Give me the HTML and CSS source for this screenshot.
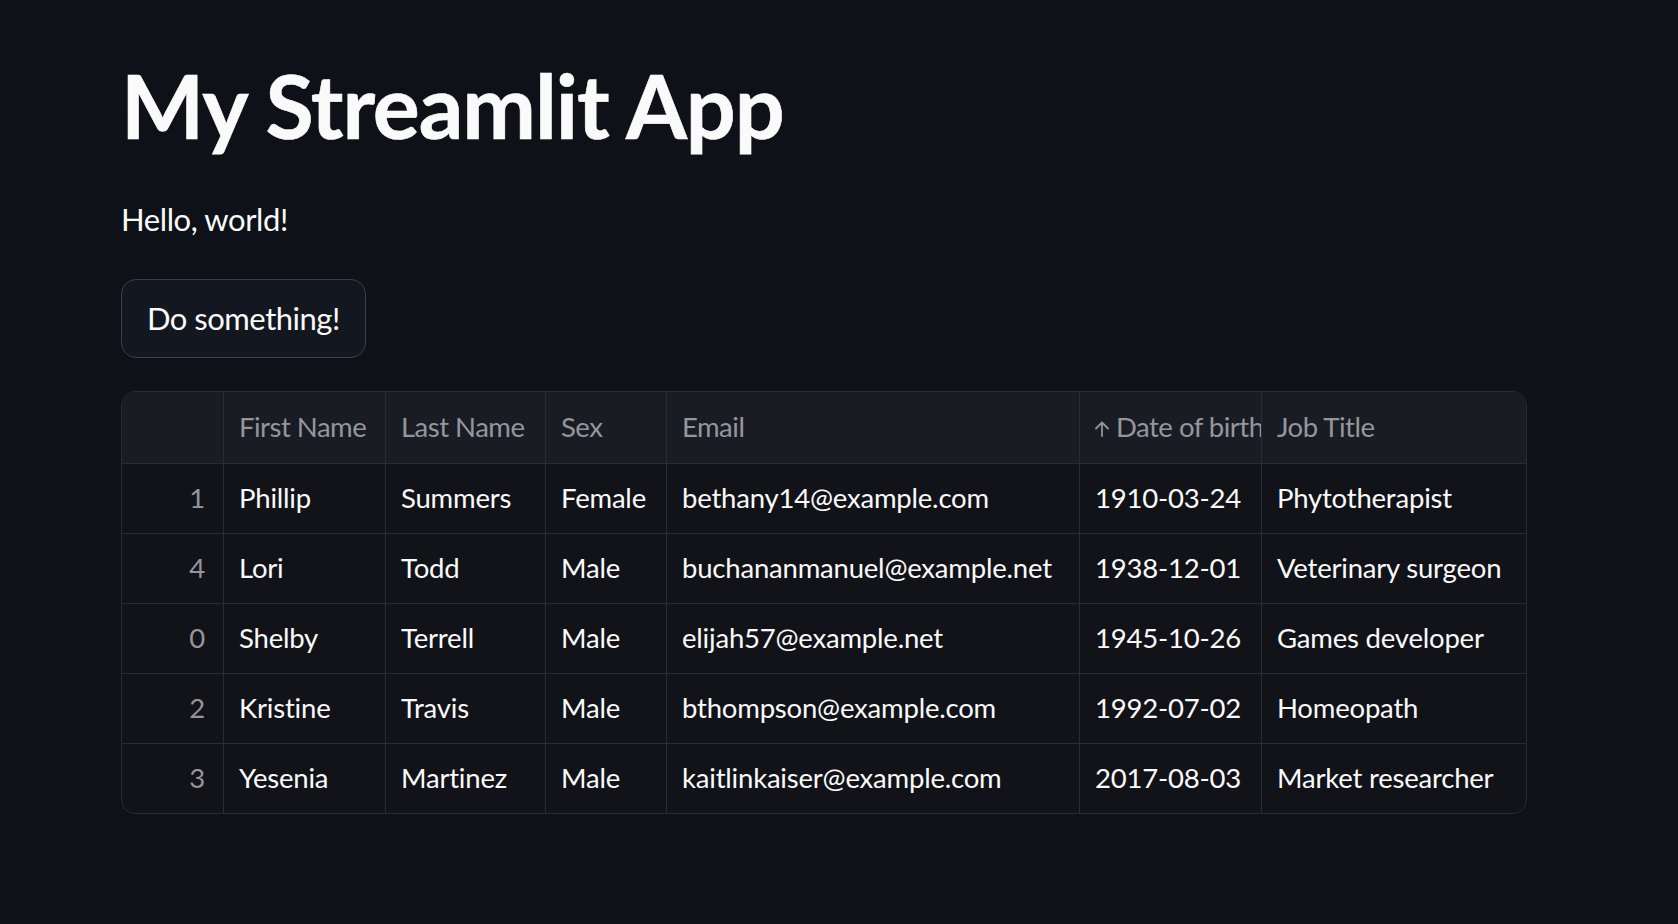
FILE: index.html
```html
<!DOCTYPE html>
<html lang="en">
<head>
<meta charset="utf-8">
<title>My Streamlit App</title>
<link rel="stylesheet" href="styles.css">
</head>
<body>
<main class="app">
  <h1 class="title">My Streamlit App</h1>
  <p class="text">Hello, world!</p>
  <button class="btn" type="button">Do something!</button>
  <div class="grid">
    <div class="row head">
      <div class="cell idx"></div>
      <div class="cell">First Name</div>
      <div class="cell">Last Name</div>
      <div class="cell">Sex</div>
      <div class="cell">Email</div>
      <div class="cell sorted"><svg class="sort" viewBox="0 0 16 17" width="16" height="17" aria-hidden="true"><path d="M8 2.5V16M2 8.5L8 2.5L14 8.5" fill="none" stroke="currentColor" stroke-width="1.8" stroke-linecap="round" stroke-linejoin="round"/></svg><span>Date of birth</span></div>
      <div class="cell last">Job Title</div>
    </div>
    <div class="row">
      <div class="cell idx">1</div>
      <div class="cell">Phillip</div>
      <div class="cell">Summers</div>
      <div class="cell">Female</div>
      <div class="cell">bethany14@example.com</div>
      <div class="cell">1910-03-24</div>
      <div class="cell last">Phytotherapist</div>
    </div>
    <div class="row">
      <div class="cell idx">4</div>
      <div class="cell">Lori</div>
      <div class="cell">Todd</div>
      <div class="cell">Male</div>
      <div class="cell">buchananmanuel@example.net</div>
      <div class="cell">1938-12-01</div>
      <div class="cell last">Veterinary surgeon</div>
    </div>
    <div class="row">
      <div class="cell idx">0</div>
      <div class="cell">Shelby</div>
      <div class="cell">Terrell</div>
      <div class="cell">Male</div>
      <div class="cell">elijah57@example.net</div>
      <div class="cell">1945-10-26</div>
      <div class="cell last">Games developer</div>
    </div>
    <div class="row">
      <div class="cell idx">2</div>
      <div class="cell">Kristine</div>
      <div class="cell">Travis</div>
      <div class="cell">Male</div>
      <div class="cell">bthompson@example.com</div>
      <div class="cell">1992-07-02</div>
      <div class="cell last">Homeopath</div>
    </div>
    <div class="row end">
      <div class="cell idx">3</div>
      <div class="cell">Yesenia</div>
      <div class="cell">Martinez</div>
      <div class="cell">Male</div>
      <div class="cell">kaitlinkaiser@example.com</div>
      <div class="cell">2017-08-03</div>
      <div class="cell last">Market researcher</div>
    </div>
  </div>
</main>
</body>
</html>
```

FILE: styles.css
```css
* { box-sizing: border-box; }

html, body {
  margin: 0;
  background: #0e1117;
  color: #fafafa;
  font-family: Lato, "Open Sans", sans-serif;
}

body { min-height: 924px; }

.app {
  display: flex;
  flex-direction: column;
  align-items: flex-start;
  padding: 53px 0 0 121px;
}

.title {
  margin: 0 0 35px 0;
  font-size: 88px;
  font-weight: 700;
  line-height: 1.2;
  color: #fafafa;
  letter-spacing: -1.1px;
  -webkit-text-stroke: 0.6px #fafafa;
}

.text {
  margin: 0 0 34px 0;
  font-size: 31px;
  line-height: 1.65;
  letter-spacing: -0.4px;
}

.btn {
  height: 79px;
  margin: 0 0 33px 0;
  padding: 0 25px;
  background: #131720;
  color: #fafafa;
  border: 1.5px solid #3c3f47;
  border-radius: 15px;
  font-family: inherit;
  font-size: 31px;
  letter-spacing: -0.5px;
  line-height: 1;
}

.grid {
  display: grid;
  grid-template-columns: 102px 162px 160px 121px 413px 182px 1fr;
  width: 1406px;
  border: 1px solid #2a2c33;
  border-radius: 14px;
  overflow: hidden;
  background: #111318;
}

.row { display: contents; }

.cell {
  display: flex;
  align-items: center;
  height: 70px;
  padding: 0 15px 1px;
  border-right: 1px solid #2a2c33;
  border-bottom: 1px solid #2a2c33;
  font-size: 27.5px;
  letter-spacing: -0.2px;
  color: #fafafa;
  white-space: nowrap;
  overflow: hidden;
}

.cell.last { border-right: none; }

.head .cell {
  height: 72px;
  background: #1a1c24;
  color: #94969c;
  letter-spacing: -0.5px;
}

.end .cell {
  height: 69px;
  border-bottom: none;
}

.cell.idx {
  justify-content: flex-end;
  padding-right: 18px;
  color: #94969c;
}

.head .sorted { gap: 6px; padding-right: 0; padding-left: 14px; }

.sort {
  flex: none;
  color: #94969c;
  margin-top: 4px;
}
```
